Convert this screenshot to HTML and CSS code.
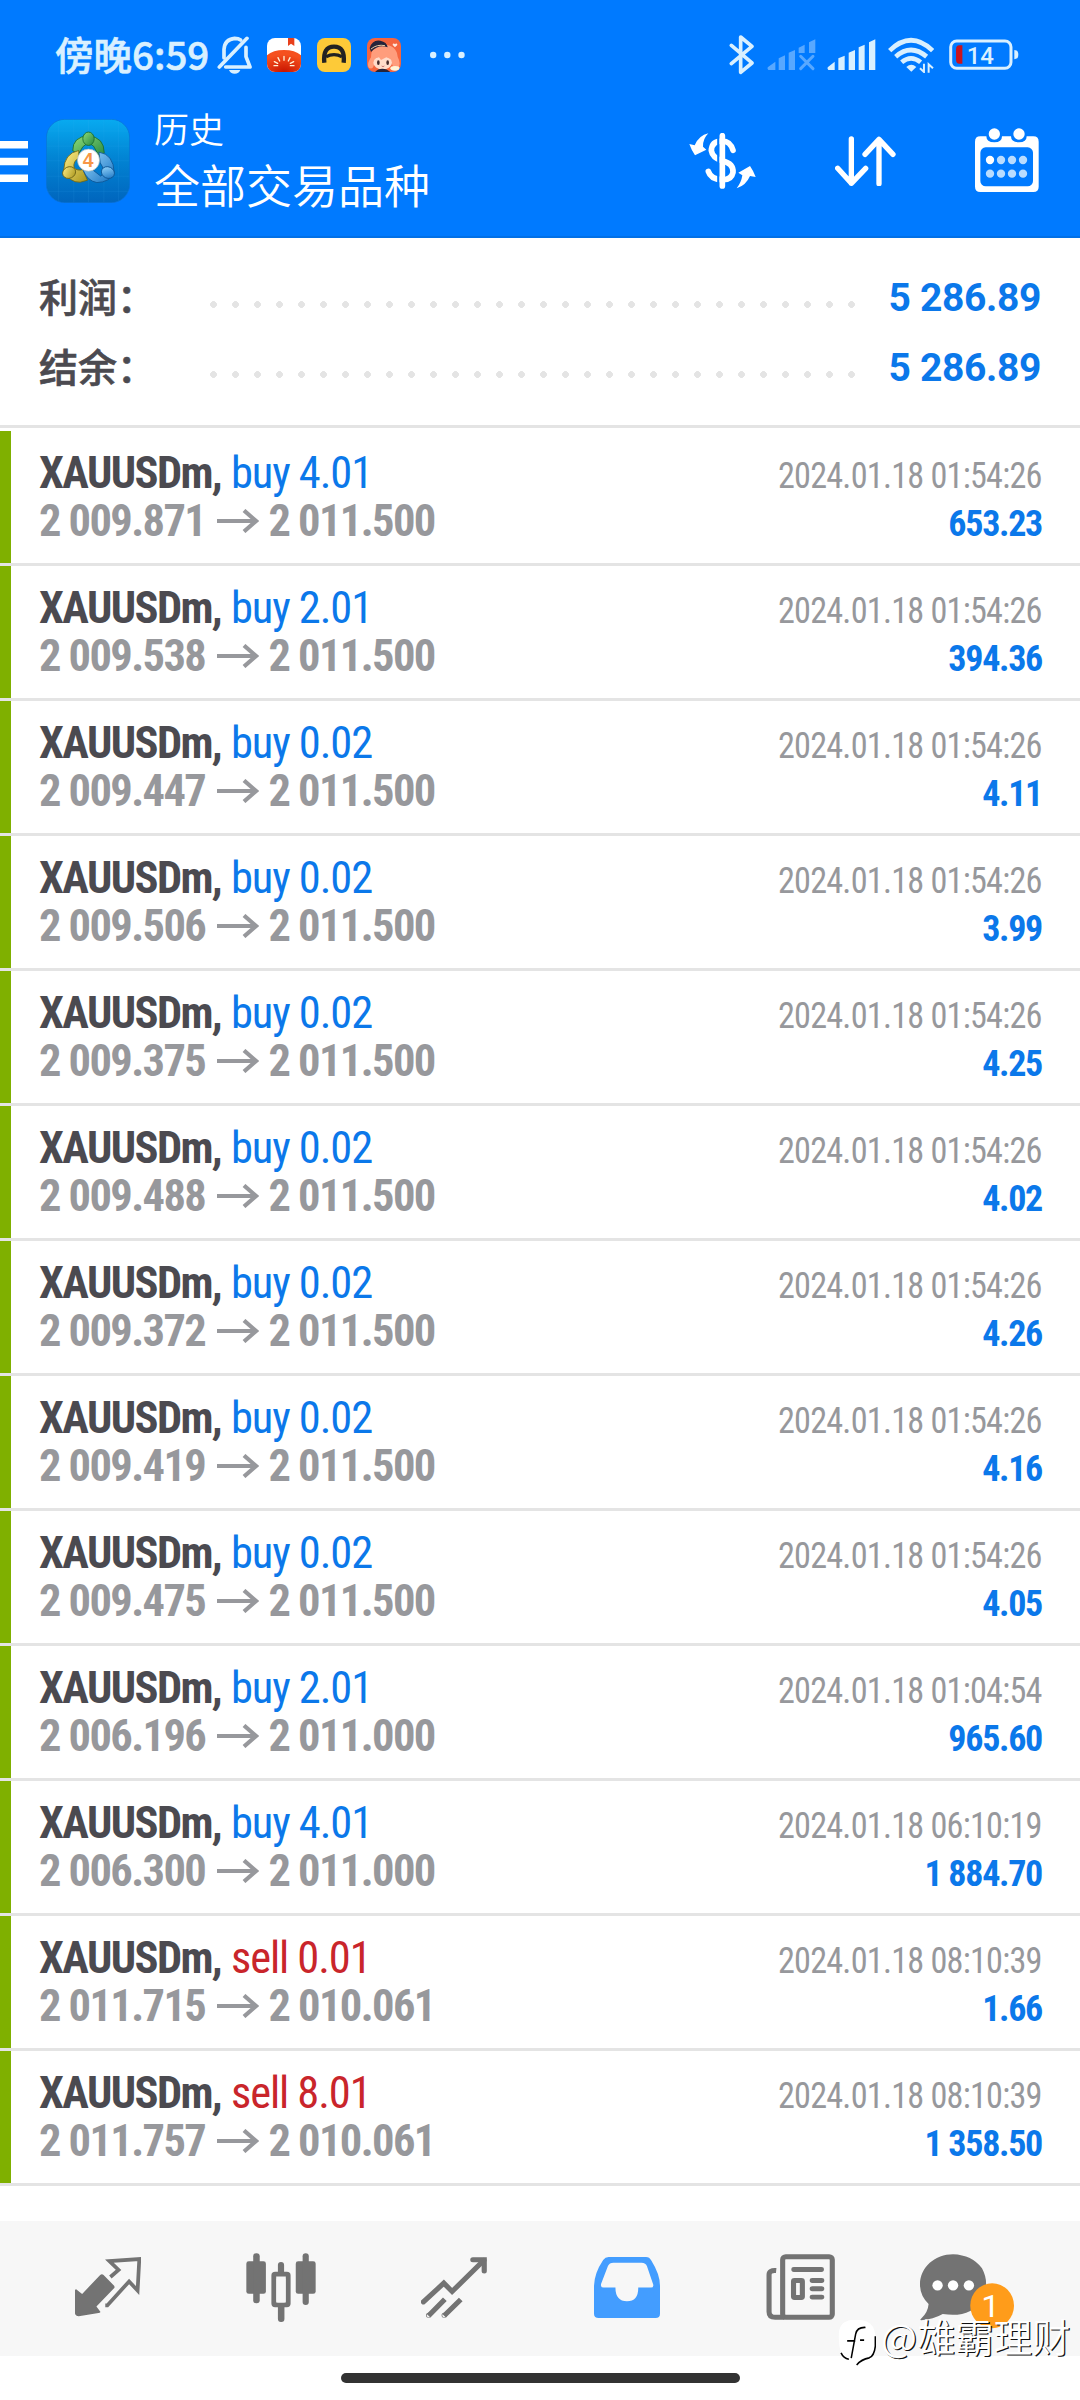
FILE: index.html
```html
<!DOCTYPE html>
<html lang="zh-CN">
<head>
<meta charset="utf-8">
<title>历史</title>
<link rel="stylesheet" href="styles.css">
</head>
<body>
<header class="header">
  <div class="status">
    <span class="clock">傍晚6:59</span>
    <svg class="bell" width="35" height="38" viewBox="650 50 105 114" fill="none" stroke="#d9f0ff" stroke-width="11" stroke-linecap="round">
      <path d="M740 57L657 143"/><path d="M671 116V90Q673 60 703 57Q714 57 721 62"/><path d="M737 84V112L749 143H676" stroke-linejoin="round"/><path d="M686 152H720Q716 163 703 163Q690 163 686 152Z" fill="#d9f0ff" stroke="none"/>
    </svg>
    <svg class="app" width="34" height="34" viewBox="0 0 102 102">
      <defs><radialGradient id="tomato" cx=".5" cy="1" r=".8"><stop offset="0" stop-color="#c81400"/><stop offset="1" stop-color="#f5501e"/></radialGradient><clipPath id="tile"><rect width="102" height="102" rx="24"/></clipPath></defs>
      <g clip-path="url(#tile)"><rect width="102" height="102" fill="#fff"/><path d="M0 52Q18 36 51 36T102 52V102H0Z" fill="url(#tomato)"/><path d="M63 0H82V24L72 17L63 24Z" fill="#e8401c"/><path d="M51 55V67M33 59L38 69M69 59L64 69M22 71L32 76M80 71L70 76M21 83H32M70 83H81" stroke="#fff3d8" stroke-width="4" stroke-linecap="round"/></g>
    </svg>
    <svg class="app" width="34" height="34" viewBox="0 0 102 102">
      <rect width="102" height="102" rx="24" fill="#fdca38"/><path d="M22 74Q17 26 51 26T80 74" fill="none" stroke="#222" stroke-width="13"/><path d="M27 56Q51 44 75 56" fill="none" stroke="#222" stroke-width="10"/>
    </svg>
    <svg class="app" width="34" height="34" viewBox="0 0 102 102">
      <g clip-path="url(#tile)"><rect width="102" height="102" fill="#f4653f"/><path d="M12 58Q12 20 50 20Q88 20 92 56Q104 80 92 90Q78 94 74 74H22Q20 96 6 90Q-2 80 12 58Z" fill="#ff9d7c"/><ellipse cx="47" cy="74" rx="28" ry="20" fill="#ffdccb"/><path d="M18 62Q22 40 48 38Q76 40 78 66L58 58L42 66L36 58Z" fill="#ff9d7c"/><path d="M8 30Q16 4 40 8Q60 12 62 28Q34 18 12 42Z" fill="#25243a"/><path d="M12 33Q30 18 54 23" stroke="#e8c9a0" stroke-width="3" fill="none"/><ellipse cx="34" cy="74" rx="4" ry="7" fill="#452b2d"/><ellipse cx="62" cy="74" rx="4" ry="7" fill="#452b2d"/><path d="M44 84Q48 88 52 84" stroke="#a44" stroke-width="2" fill="none"/><path d="M24 102Q32 92 46 92T70 102Z" fill="#25243a"/><ellipse cx="84" cy="91" rx="14" ry="7" fill="#fff5d8"/><path d="M84 28L77 21Q77 14 84 18Q91 14 91 21Z" fill="#ffe6dc"/></g>
    </svg>
    <svg class="more" width="35" height="8" viewBox="0 0 35 8" fill="#d9f0ff"><circle cx="3.2" cy="4" r="3.2"/><circle cx="17.3" cy="4" r="3.2"/><circle cx="31.5" cy="4" r="3.2"/></svg>
    <div class="radios">
      <svg width="25" height="39.3" viewBox="205 45 75 118" fill="none" stroke="#d9f0ff" stroke-width="11" stroke-linecap="round" stroke-linejoin="round"><path d="M212 76L274 129L240 157V51L274 79L212 131"/></svg>
      <svg class="sim" width="48.7" height="31.3" viewBox="320 60 146 94" fill="#58a8ff"><path d="M322 145L345 128V153H324Q320 150 322 145ZM355 118L374 109V153H355ZM385 101L404 93V153H385ZM415 86L433 77V102H415ZM446 70L465 61V102H446Z"/><path d="M421 112L458 149M458 112L421 149" stroke="#58a8ff" stroke-width="9" stroke-linecap="round"/></svg>
      <svg class="sim2" width="48.7" height="31.3" viewBox="500 60 146 94" fill="#d9f0ff"><path d="M502 145L523 128V153H504Q500 150 502 145ZM534 118L553 110V153H534ZM565 101L584 93V153H565ZM595 85L613 77V153H595ZM626 70L645 61V153H626Z"/></svg>
      <svg class="wifi" width="46.3" height="36.3" viewBox="683 53 139 109" fill="none" stroke="#d9f0ff" stroke-width="14"><path d="M688 94Q752 32 817 94M706 112Q752 72 799 112M724 129Q752 105 781 129"/><path d="M738 143Q753 130 768 143L753 157Z" fill="#d9f0ff" stroke="none"/><path d="M791 133V158L779 147M805 160V135L818 147" stroke-width="6"/></svg>
      <svg class="battery" width="69.7" height="31.3" viewBox="866 58 209 94"><rect x="871" y="64" width="181" height="82" rx="18" fill="none" stroke="#d9f0ff" stroke-width="9"/><path d="M1062 91Q1074 91 1074 105T1062 119Z" fill="#d9f0ff"/><path d="M906 77V132H897Q887 132 887 120V89Q887 77 897 77Z" fill="#c9141e"/><text class="charge" x="960" y="132" text-anchor="middle">14</text></svg>
    </div>
  </div>
  <div class="appbar">
    <svg width="28" height="41" viewBox="0 0 28 41" fill="#fff"><path d="M0 0H28V7.5H0ZM0 16.7H28V24.2H0ZM0 33.4H28V40.9H0Z"/></svg>
    <svg class="logo" width="84" height="84" viewBox="138 299 251 251">
      <defs>
        <linearGradient id="sky" x2="0" y2="1"><stop offset="0" stop-color="#08aaf0"/><stop offset=".45" stop-color="#0285d4"/><stop offset="1" stop-color="#0065bd"/></linearGradient>
        <linearGradient id="g" x2="1" y2="1"><stop offset="0" stop-color="#8fdc7a"/><stop offset="1" stop-color="#23873f"/></linearGradient>
        <linearGradient id="y" x2="1" y2="1"><stop offset="0" stop-color="#fff08a"/><stop offset="1" stop-color="#a79217"/></linearGradient>
        <linearGradient id="b" x2="1" y2="1"><stop offset="0" stop-color="#9fdcff"/><stop offset="1" stop-color="#126fc0"/></linearGradient>
      </defs>
      <rect x="139" y="300" width="249" height="249" rx="55" fill="url(#sky)" stroke="#0a70d4" stroke-width="2"/>
      <path d="M175 305V544M221 301V548M265 301V548M311 301V548M355 305V544M140 335H387M140 380H387M140 424H387M140 470H387M140 515H387" stroke="#4cb8f5" stroke-opacity=".22" stroke-width="1.5"/>
      <g stroke-width="2.5">
        <path d="M218 394Q217 352 265 349Q312 354 312 400L300 416L280 380Q265 366 248 382L236 402Z" fill="url(#g)" stroke="#186a2c"/>
        <path d="M236 393Q192 402 191 452Q207 489 240 488L262 482L248 450Q232 455 222 445Q218 425 236 416Z" fill="url(#y)" stroke="#6d6415"/>
        <path d="M296 398Q340 404 342 460Q328 488 290 489Q262 484 249 452L276 450L302 470Q318 456 300 430Z" fill="url(#b)" stroke="#0d5594"/>
        <ellipse cx="265" cy="358" rx="17" ry="20" fill="url(#g)" stroke="#186a2c"/>
        <ellipse cx="207" cy="459" rx="20" ry="17" transform="rotate(-25 207 459)" fill="url(#y)" stroke="#6d6415"/>
        <ellipse cx="323" cy="459" rx="20" ry="17" transform="rotate(25 323 459)" fill="url(#b)" stroke="#0d5594"/>
      </g>
      <circle cx="265" cy="422" r="33" fill="#fff" stroke="#a9b7b7" stroke-width="2"/>
      <text class="four" x="264" y="442" text-anchor="middle">4</text>
    </svg>
    <div class="titles"><div class="sub">历史</div><h1 class="title">全部交易品种</h1></div>
    <div class="actions">
      <svg width="66.7" height="55.7" viewBox="86 340 200 167">
        <path d="M144 341Q127 358 128 381L138 390L104 407Q94 393 87 373L103 377Q116 347 144 341ZM229 506Q243 488 246 467L234 459L269 439Q280 455 286 472L269 469Q257 497 229 506Z" fill="#fff"/>
        <path d="M218 392Q210 364 185 364Q154 364 153 393Q156 414 186 424Q220 431 218 458Q213 482 184 480Q151 478 144 455" fill="none" stroke="#fff" stroke-width="17" stroke-linecap="round"/>
        <path d="M174 345V500" stroke="#007aff" stroke-width="7"/><path d="M186 348V499" stroke="#fff" stroke-width="17" stroke-linecap="round"/>
      </svg>
      <svg width="60.7" height="50.3" viewBox="524 347 182 151" fill="none" stroke="#fff" stroke-width="16" stroke-linecap="round" stroke-linejoin="round"><path d="M573 356V489M532 444L573 489L616 444M656 490V357M614 402L656 357L698 402"/></svg>
      <svg class="cal" width="63.7" height="64" viewBox="945 323 191 192" fill="#fff">
        <path d="M961 348H979Q979 366 1003 366Q1026 366 1026 348H1053Q1053 366 1077 366Q1100 366 1100 348H1120Q1136 348 1136 364V499Q1136 515 1120 515H961Q945 515 945 499V364Q945 348 961 348Z"/><rect x="961" y="381" width="158" height="117" rx="16" fill="#007aff"/><circle cx="1003" cy="341" r="17"/><circle cx="1077" cy="341" r="17"/><circle cx="990" cy="419" r="12.5"/>
        <g fill="#b9dcff"><circle cx="1023" cy="419" r="12.5"/><circle cx="1056" cy="419" r="12.5"/><circle cx="1089" cy="419" r="12.5"/><circle cx="990" cy="460" r="12.5"/><circle cx="1023" cy="460" r="12.5"/><circle cx="1056" cy="460" r="12.5"/><circle cx="1089" cy="460" r="12.5"/></g>
      </svg>
    </div>
  </div>
</header>
<svg class="defs" width="0" height="0"><symbol id="to" viewBox="0 0 42 24"><path d="M0 12H39M27 1.5L39 12L27 22.5" fill="none" stroke="#97989c" stroke-width="4.2"/></symbol></svg>
<section class="summary">
  <div class="sum"><span class="label">利润：</span><span class="dots"></span><span class="total">5 286.89</span></div>
  <div class="sum"><span class="label">结余：</span><span class="dots"></span><span class="total">5 286.89</span></div>
</section>
<main class="deals">
  <article class="deal"><div class="left"><div class="line"><b class="sym">XAUUSDm,</b><span class="buy">buy 4.01</span></div><div class="line price"><b class="from">2 009.871</b><svg class="to"><use href="#to"/></svg><b>2 011.500</b></div></div><div class="right"><div class="date">2024.01.18 01:54:26</div><div class="profit">653.23</div></div></article>
  <article class="deal"><div class="left"><div class="line"><b class="sym">XAUUSDm,</b><span class="buy">buy 2.01</span></div><div class="line price"><b class="from">2 009.538</b><svg class="to"><use href="#to"/></svg><b>2 011.500</b></div></div><div class="right"><div class="date">2024.01.18 01:54:26</div><div class="profit">394.36</div></div></article>
  <article class="deal"><div class="left"><div class="line"><b class="sym">XAUUSDm,</b><span class="buy">buy 0.02</span></div><div class="line price"><b class="from">2 009.447</b><svg class="to"><use href="#to"/></svg><b>2 011.500</b></div></div><div class="right"><div class="date">2024.01.18 01:54:26</div><div class="profit">4.11</div></div></article>
  <article class="deal"><div class="left"><div class="line"><b class="sym">XAUUSDm,</b><span class="buy">buy 0.02</span></div><div class="line price"><b class="from">2 009.506</b><svg class="to"><use href="#to"/></svg><b>2 011.500</b></div></div><div class="right"><div class="date">2024.01.18 01:54:26</div><div class="profit">3.99</div></div></article>
  <article class="deal"><div class="left"><div class="line"><b class="sym">XAUUSDm,</b><span class="buy">buy 0.02</span></div><div class="line price"><b class="from">2 009.375</b><svg class="to"><use href="#to"/></svg><b>2 011.500</b></div></div><div class="right"><div class="date">2024.01.18 01:54:26</div><div class="profit">4.25</div></div></article>
  <article class="deal"><div class="left"><div class="line"><b class="sym">XAUUSDm,</b><span class="buy">buy 0.02</span></div><div class="line price"><b class="from">2 009.488</b><svg class="to"><use href="#to"/></svg><b>2 011.500</b></div></div><div class="right"><div class="date">2024.01.18 01:54:26</div><div class="profit">4.02</div></div></article>
  <article class="deal"><div class="left"><div class="line"><b class="sym">XAUUSDm,</b><span class="buy">buy 0.02</span></div><div class="line price"><b class="from">2 009.372</b><svg class="to"><use href="#to"/></svg><b>2 011.500</b></div></div><div class="right"><div class="date">2024.01.18 01:54:26</div><div class="profit">4.26</div></div></article>
  <article class="deal"><div class="left"><div class="line"><b class="sym">XAUUSDm,</b><span class="buy">buy 0.02</span></div><div class="line price"><b class="from">2 009.419</b><svg class="to"><use href="#to"/></svg><b>2 011.500</b></div></div><div class="right"><div class="date">2024.01.18 01:54:26</div><div class="profit">4.16</div></div></article>
  <article class="deal"><div class="left"><div class="line"><b class="sym">XAUUSDm,</b><span class="buy">buy 0.02</span></div><div class="line price"><b class="from">2 009.475</b><svg class="to"><use href="#to"/></svg><b>2 011.500</b></div></div><div class="right"><div class="date">2024.01.18 01:54:26</div><div class="profit">4.05</div></div></article>
  <article class="deal"><div class="left"><div class="line"><b class="sym">XAUUSDm,</b><span class="buy">buy 2.01</span></div><div class="line price"><b class="from">2 006.196</b><svg class="to"><use href="#to"/></svg><b>2 011.000</b></div></div><div class="right"><div class="date">2024.01.18 01:04:54</div><div class="profit">965.60</div></div></article>
  <article class="deal"><div class="left"><div class="line"><b class="sym">XAUUSDm,</b><span class="buy">buy 4.01</span></div><div class="line price"><b class="from">2 006.300</b><svg class="to"><use href="#to"/></svg><b>2 011.000</b></div></div><div class="right"><div class="date">2024.01.18 06:10:19</div><div class="profit">1 884.70</div></div></article>
  <article class="deal"><div class="left"><div class="line"><b class="sym">XAUUSDm,</b><span class="sell">sell 0.01</span></div><div class="line price"><b class="from">2 011.715</b><svg class="to"><use href="#to"/></svg><b>2 010.061</b></div></div><div class="right"><div class="date">2024.01.18 08:10:39</div><div class="profit">1.66</div></div></article>
  <article class="deal"><div class="left"><div class="line"><b class="sym">XAUUSDm,</b><span class="sell">sell 8.01</span></div><div class="line price"><b class="from">2 011.757</b><svg class="to"><use href="#to"/></svg><b>2 010.061</b></div></div><div class="right"><div class="date">2024.01.18 08:10:39</div><div class="profit">1 358.50</div></div></article>
</main>
<footer class="footer">
  <nav class="nav">
    <span class="tab"><svg width="66" height="60" viewBox="218 177 194 177" preserveAspectRatio="none"><path d="M292 230Q297 226 302 230L333 262Q336 267 332 270L281 323L293 339Q291 342 287 342L229 352Q220 352 218 344V274Q221 271 224 274L239 286Z" fill="#737373"/><path d="M322 236L346 215L319 189L407 183L402 276L377 249L313 320H307" fill="none" stroke="#737373" stroke-width="11"/></svg></span>
    <span class="tab"><svg width="70" height="69" viewBox="714 161 204 206" preserveAspectRatio="none" fill="#737373"><rect x="715" y="186" width="57" height="97" rx="7"/><rect x="735" y="162" width="19" height="149" rx="9"/><rect x="859" y="186" width="58" height="97" rx="7"/><rect x="879" y="162" width="18" height="154" rx="9"/><rect x="807" y="188" width="18" height="40" rx="9"/><rect x="807" y="312" width="19" height="55" rx="9"/><rect x="795" y="224" width="42" height="92" rx="4" fill="none" stroke="#737373" stroke-width="14"/><rect x="803" y="234" width="26" height="75" rx="5" fill="#f7f7f7"/></svg></span>
    <span class="tab"><svg width="66" height="61" viewBox="1223 170 191 182" preserveAspectRatio="none" fill="none" stroke="#737373" stroke-width="15"><path d="M1230 304L1289 248L1313 273L1405 180" stroke-linecap="round"/><path d="M1373 178H1406V212" stroke-linecap="round" stroke-width="15"/><path d="M1245 345L1292 296M1290 345L1338 297"/><circle cx="1245" cy="344" r="1" stroke-width="13"/><circle cx="1290" cy="344" r="1" stroke-width="13"/></svg></span>
    <span class="tab"><svg width="66" height="61" viewBox="157 170 194 182" preserveAspectRatio="none"><path fill-rule="evenodd" d="M200 170H310Q320 170 325 180Q351 222 351 256V339Q351 352 338 352H171Q157 352 157 339V256Q158 218 184 179Q190 170 200 170ZM214 187Q202 187 198 197L178 250Q175 261 185 261H220Q220 302 254 302T287 261H325Q333 261 331 252L313 198Q309 187 297 187Z" fill="#439dff"/></svg></span>
    <span class="tab"><svg width="69" height="66" viewBox="656 161 203 199" preserveAspectRatio="none" fill="none" stroke="#737373" stroke-width="15"><rect x="705" y="169" width="146" height="183" rx="9"/><path d="M686 211Q665 209 665 224V335Q665 352 683 352H710"/><path d="M738 208H819M792 241H820M792 266H820M792 291H820" stroke-linecap="round"/><rect x="737" y="241" width="26" height="51" rx="3"/></svg></span>
    <span class="tab chat"><svg width="94" height="76" viewBox="1103 161 273 228" preserveAspectRatio="none"><path d="M1199 162Q1254 164 1283 204Q1307 250 1283 298Q1250 354 1169 341Q1142 357 1106 360Q1102 358 1106 355Q1126 337 1128 311Q1103 286 1103 253C1103 200 1147 162 1199 162Z" fill="#737373"/><g fill="#fff"><ellipse cx="1154" cy="255" rx="15" ry="15.5"/><ellipse cx="1199" cy="255" rx="15" ry="15.5"/><ellipse cx="1245" cy="255" rx="15" ry="15.5"/></g><ellipse cx="1312.5" cy="316" rx="63.5" ry="67.5" fill="#ff9c1a"/><text class="one" x="1308" y="350" text-anchor="middle">1</text></svg></span>
  </nav>
  <div class="home"></div>
</footer>
<div class="mark">
  <svg width="38" height="46" viewBox="866 362 112 130" preserveAspectRatio="none"><path d="M895 364Q922 357 950 366Q974 374 976 408Q979 452 958 466Q937 472 921 489L924 473Q888 475 875 455Q866 430 869 393Q873 370 895 364Z" fill="#fff"/><path d="M947 383Q922 382 918 402L905 470M893 421H917M931 419H943M976 408V436Q973 464 958 469Q935 473 921 489M875 455Q882 470 898 473" fill="none" stroke="#000" stroke-width="4.5"/></svg>
  <span class="who">@雄霸理财</span>
</div>
</body>
</html>
```
FILE: styles.css
```css
* { box-sizing: border-box; }
body {
  position: relative;
  margin: 0;
  width: 1080px;
  height: 2400px;
  overflow: hidden;
  background: #fff;
  font-family: Roboto, "Noto Sans CJK SC", sans-serif;
  display: flex;
  flex-direction: column;
}
svg { display: block; flex: none; }
.defs { position: absolute; }

.header {
  height: 238px;
  background: #007aff;
  border-bottom: 2px solid #0270e6;
  color: #fff;
}
.status { display: flex; align-items: center; height: 110px; padding: 0 61.5px 0 55px; }
.clock {
  width: 154px;
  margin: -4px 8px 0 0;
  font: 500 38.5px/56px "Noto Sans CJK SC", sans-serif;
  color: #d9f0ff;
  -webkit-text-stroke: .6px #d9f0ff;
  white-space: nowrap;
}
.app { margin-left: 16px; }
.bell + .app { margin-left: 15px; }
.more { margin-left: 29px; }
.radios { display: flex; align-items: center; margin-left: auto; }
.sim { margin-left: 13.3px; }
.sim2 { margin-left: 11.3px; }
.wifi { margin-left: 12.3px; }
.battery { margin-left: 14.7px; }
.charge { font: 500 72px Roboto, sans-serif; fill: #d9f0ff; }

.appbar { display: flex; align-items: center; height: 102px; padding-right: 41px; }
.logo { margin-left: 18px; }
.four { font: 700 58px "Liberation Sans", sans-serif; fill: #f79646; }
.titles { margin: -8px 0 0 24px; font-family: "Noto Sans CJK SC", sans-serif; }
.sub { font-size: 35px; line-height: 50px; font-weight: 350; }
.title { margin: 1px 0 0; font-size: 46px; line-height: 58px; font-weight: 350; }
.actions { display: flex; align-items: center; gap: 79.5px; margin-left: auto; }
.cal { margin-top: -3px; }

.summary { height: 190px; padding: 24px 39px 0; border-bottom: 3px solid #e4e4e4; }
.sum { display: flex; align-items: center; height: 70px; }
.label {
  width: 171px;
  margin-top: -5px;
  font: 500 39px/70px "Noto Sans CJK SC", sans-serif;
  color: #4b4a50;
  -webkit-text-stroke: .6px #4b4a50;
}
.dots {
  width: 660px;
  height: 7px;
  margin-top: 14px;
  background: radial-gradient(circle 3.5px at 3.5px 3.5px, #e4e4e4 3.1px, transparent 3.6px) 0 0 / 22px 7px;
}
.total { flex: 1; margin-top: 2px; text-align: right; font-size: 39px; font-weight: 700; letter-spacing: -.35px; color: #0b78ea; white-space: nowrap; }

.deals { padding-top: 3px; font-stretch: 75%; font-family: "Roboto Condensed", Roboto, sans-serif; }
.deal {
  display: flex;
  justify-content: space-between;
  height: 135px;
  border-bottom: 3px solid #e4e4e4;
  padding: 18px 38px 0 28px;
}
.deal::before { content: ""; width: 11px; margin: -18px 0 0 -28px; background: #7fb000; }
.left { flex: 1; padding-left: 28px; font-size: 44.5px; line-height: 48px; letter-spacing: -1.6px; white-space: nowrap; color: #4b4a50; }
.line { display: flex; align-items: center; height: 48px; }
.sym { width: 192px; }
.buy, .sell { letter-spacing: -1.1px; }
.buy { color: #0b78ea; }
.sell { color: #c9252b; }
.price { color: #97989c; }
.from { width: 177.5px; }
.to { width: 42px; height: 24px; margin-right: 10px; }
.right { padding-top: 3px; font-size: 36px; line-height: 48px; text-align: right; white-space: nowrap; }
.date { color: #97989c; letter-spacing: -.8px; transform: scaleX(.95); transform-origin: right; }
.profit { color: #0b78ea; font-weight: 700; letter-spacing: -1.3px; }

.footer { margin-top: 35px; }
.nav { display: grid; grid-template-columns: repeat(6, 173px); height: 135px; padding-left: 21.5px; background: #f7f7f7; }
.tab { display: flex; align-items: center; justify-content: center; padding-bottom: 3px; }
.chat { padding: 6px 12px 0 0; }
.one { font: 400 96px Roboto, sans-serif; fill: #fff; }
.home { width: 399px; height: 10px; margin: 17px auto 0; border-radius: 5px; background: #323232; }

/* author mark floating over the footer */
.mark { position: absolute; left: 838px; top: 2320px; display: flex; align-items: flex-start; gap: 5px; }
.who { margin-top: -7px; font: 350 38.4px/44px "Noto Sans CJK SC", sans-serif; color: #fff; text-shadow: 1.3px 1.3px .5px #111; white-space: nowrap; }
```
